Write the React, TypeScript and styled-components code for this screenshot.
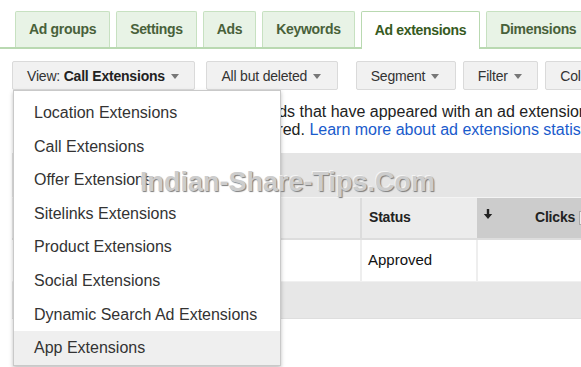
import styled, { createGlobalStyle } from "styled-components";

const GlobalStyle = createGlobalStyle`
  body {
    margin: 0;
    background: #ffffff;
    font-family: "Liberation Sans", Arial, sans-serif;
  }
`;

const tabs = ["Ad groups", "Settings", "Ads", "Keywords", "Ad extensions", "Dimensions"];

const menuItems = [
  "Location Extensions",
  "Call Extensions",
  "Offer Extensions",
  "Sitelinks Extensions",
  "Product Extensions",
  "Social Extensions",
  "Dynamic Search Ad Extensions",
  "App Extensions",
];

const Caret = () => <CaretShape />;

const DownArrow = () => (
  <svg width="10" height="10" viewBox="0 0 10 10">
    <path d="M3.8 0h2.4v5h3l-4.2 5-4.2-5h3z" fill="#222" />
  </svg>
);

const App = () => {
  return (
    <Page>
      <GlobalStyle />
      <Tabs>
        {tabs.map((t) => (
          <Tab key={t} active={t === "Ad extensions"}>
            {t}
          </Tab>
        ))}
      </Tabs>

      <Toolbar>
        <ViewWrap>
          <ToolButton>
            <span>
              View: <b>Call Extensions</b>
            </span>
            <Caret />
          </ToolButton>
          <Menu>
            {menuItems.map((m) => (
              <MenuItem key={m} hover={m === "App Extensions"}>
                {m}
              </MenuItem>
            ))}
          </Menu>
        </ViewWrap>
        <ToolButton>
          All but deleted
          <Caret />
        </ToolButton>
        <Divider />
        <ToolButton>
          Segment
          <Caret />
        </ToolButton>
        <ToolButton>
          Filter
          <Caret />
        </ToolButton>
        <ToolButton>
          Columns
          <Caret />
        </ToolButton>
      </Toolbar>

      <Message>
        <Line>This table shows statistics for keywords that have appeared with an ad extension,</Line>
        <Line>
          only for the time the extension appeared. <Link>Learn more about ad extensions statistics</Link>
        </Line>
      </Message>

      <Table>
        <Band />
        <HeaderRow>
          <FirstCell />
          <StatusHead>Status</StatusHead>
          <ClicksHead>
            <ArrowSlot>
              <DownArrow />
            </ArrowSlot>
            <ClicksLabel>Clicks</ClicksLabel>
            <HelpBox />
          </ClicksHead>
        </HeaderRow>
        <DataRow>
          <FirstCell />
          <StatusCell>Approved</StatusCell>
        </DataRow>
        <FooterBand />
      </Table>

      <Watermark>Indian-Share-Tips.Com</Watermark>
    </Page>
  );
};

const Page = styled.div`
  position: relative;
  width: 581px;
  height: 367px;
  overflow: hidden;
`;

const Tabs = styled.div`
  display: flex;
  gap: 6px;
  margin-top: 11px;
  padding-left: 15px;
  height: 36px;
  border-bottom: 2px solid #b9d9b1;
`;

const Tab = styled.div<{ active?: boolean }>`
  flex-shrink: 0;
  display: flex;
  align-items: center;
  box-sizing: border-box;
  height: ${(p) => (p.active ? "38px" : "36px")};
  padding: 0 13px 1px;
  border: 1px solid ${(p) => (p.active ? "#b9d9b1" : "#c7e1c1")};
  border-bottom: none;
  border-radius: 2px 2px 0 0;
  background: ${(p) => (p.active ? "#ffffff" : "#e8f3e6")};
  color: ${(p) => (p.active ? "#365a22" : "#48613a")};
  font-size: 14px;
  font-weight: 700;
  letter-spacing: -0.32px;
  white-space: nowrap;
`;

const Toolbar = styled.div`
  display: flex;
  gap: 7px;
  height: 29px;
  margin-top: 12px;
  padding-left: 12px;
`;

const ViewWrap = styled.div`
  position: relative;
  display: flex;
  margin-right: 4px;
`;

const ToolButton = styled.div`
  flex-shrink: 0;
  display: flex;
  align-items: center;
  gap: 6px;
  box-sizing: border-box;
  height: 29px;
  padding: 0 15.5px 0 14px;
  border: 1px solid #dadada;
  border-radius: 2px;
  background: #f1f1f1;
  color: #333;
  font-size: 14px;
  letter-spacing: -0.2px;
  white-space: nowrap;
  b {
    color: #222;
  }
`;

const CaretShape = styled.span`
  width: 0;
  height: 0;
  border-left: 4px solid transparent;
  border-right: 4px solid transparent;
  border-top: 5px solid #777;
  margin-top: 1px;
`;

const Divider = styled.div`
  width: 2px;
  background: #ececec;
  margin: 0 3px 0 1px;
`;

const Menu = styled.div`
  position: absolute;
  top: 29px;
  left: 1px;
  z-index: 2;
  box-sizing: border-box;
  width: 268px;
  padding-top: 5px;
  background: #ffffff;
  border: 1px solid #c9c9c9;
  box-shadow: 0 2px 4px rgba(0, 0, 0, 0.25);
`;

const MenuItem = styled.div<{ hover?: boolean }>`
  height: 33.6px;
  line-height: 33.6px;
  padding-left: 20px;
  font-size: 16px;
  color: #333;
  white-space: nowrap;
  background: ${(p) => (p.hover ? "#efefef" : "transparent")};
`;

const Message = styled.div`
  margin-top: 13px;
  padding-left: 15px;
  font-size: 16px;
  line-height: 18px;
  color: #222;
`;

const Line = styled.div`
  white-space: nowrap;
`;

const Link = styled.span`
  color: #1a5bcc;
`;

const Table = styled.div`
  margin-top: 14px;
  margin-left: 12px;
`;

const Band = styled.div`
  height: 44px;
  background: #e5e5e5;
  border-bottom: 1px solid #f4f4f4;
`;

const HeaderRow = styled.div`
  display: flex;
  height: 40px;
  border-bottom: 2px solid #dddddd;
  background: #ececec;
`;

const FirstCell = styled.div`
  width: 348px;
  flex-shrink: 0;
`;

const StatusHead = styled.div`
  flex-shrink: 0;
  box-sizing: border-box;
  width: 117px;
  display: flex;
  align-items: center;
  padding: 0 0 3px 7px;
  border-left: 2px solid #dcdcdc;
  font-size: 14px;
  font-weight: 700;
  letter-spacing: -0.2px;
  color: #222;
`;

const ClicksHead = styled.div`
  flex-shrink: 0;
  display: flex;
  align-items: center;
  width: 200px;
  background: #cccccc;
`;

const ArrowSlot = styled.div`
  align-self: flex-start;
  margin: 11px 0 0 6px;
  line-height: 0;
`;

const ClicksLabel = styled.span`
  margin-left: 42px;
  padding-bottom: 3px;
  font-size: 14px;
  font-weight: 700;
  letter-spacing: -0.2px;
  color: #222;
`;

const HelpBox = styled.span`
  width: 12px;
  height: 12px;
  margin-left: 4px;
  border: 1px solid #a8a8a8;
  background: #eeeeee;
`;

const DataRow = styled.div`
  display: flex;
  height: 41px;
  background: #ffffff;
`;

const StatusCell = styled.div`
  flex-shrink: 0;
  box-sizing: border-box;
  width: 118px;
  display: flex;
  align-items: center;
  padding: 0 0 2px 6px;
  border-left: 2px solid #eeeeee;
  border-right: 2px solid #eeeeee;
  font-size: 15px;
  color: #111;
`;

const FooterBand = styled.div`
  height: 36px;
  background: #e7e7e7;
  border-top: 1px solid #f0f0f0;
  border-bottom: 1px solid #dedede;
`;

const Watermark = styled.div`
  position: absolute;
  left: 140px;
  top: 169px;
  z-index: 3;
  font-size: 27px;
  line-height: 27px;
  font-weight: 700;
  color: #cdcdcd;
  text-shadow: 1px 1px 1px #7d7d7d, -1px -1px 0 rgba(255, 255, 255, 0.6);
  white-space: nowrap;
  pointer-events: none;
`;

export default App;
